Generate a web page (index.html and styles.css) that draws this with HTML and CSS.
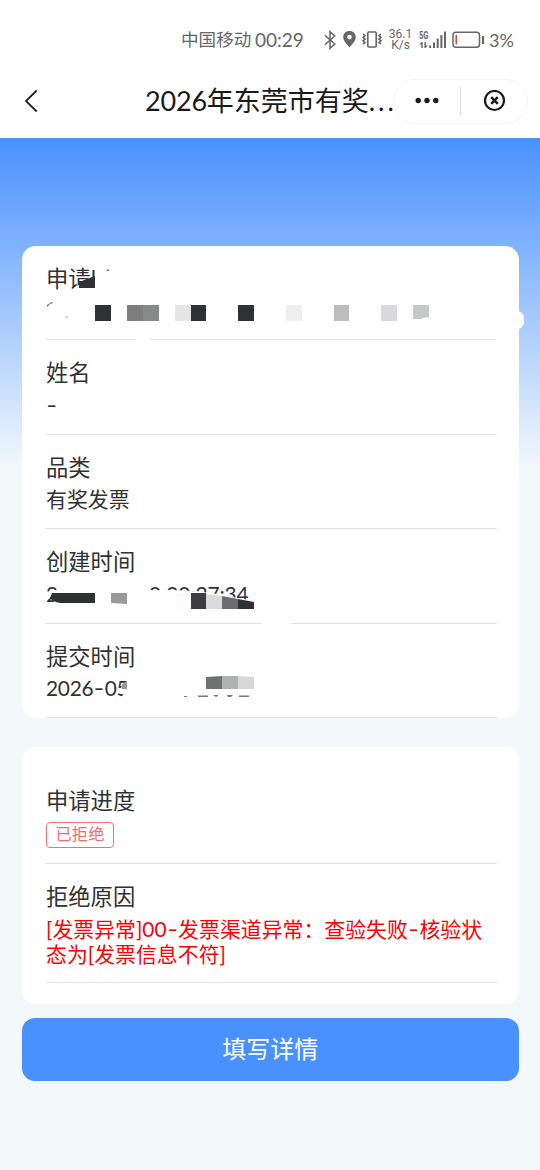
FILE: index.html
```
<!DOCTYPE html>
<html lang="zh-CN">
<head>
<meta charset="utf-8">
<title>2026年东莞市有奖发票</title>
<link rel="stylesheet" href="styles.css">
</head>
<body>
<div class="status">
  <span class="carrier">中国移动</span>
  <span class="clock">00:29</span>
  <svg class="bt" width="12" height="20" viewBox="0 0 12 20" fill="none" stroke="#666" stroke-width="1.5"><path d="M.8 5.2 10.8 14 6 18.4V1.6L10.8 6 .8 14.8"/></svg>
  <svg class="pin" width="13" height="17" viewBox="0 0 13 17"><path fill="#666" fill-rule="evenodd" d="M6.500 0C2.800 0 .2 2.700.2 6.100c0 4 3.800 7.100 6.300 10.400 2.500-3.300 6.300-6.400 6.300-10.400C12.800 2.700 10.200 0 6.500 0ZM6.500 3.800a2.300 2.300 0 1 1 0 4.600 2.300 2.300 0 0 1 0-4.600Z"/></svg>
  <svg class="vib" width="20" height="17" viewBox="0 0 20 17" fill="none" stroke="#666" stroke-width="1.6"><rect x="5.800" y="1" width="8.400" height="15" rx="1"/><path d="M1 3 3 4.700 1 6.400l2 1.700-2 1.700 2 1.700-2 1.700M19 3l-2 1.700 2 1.700-2 1.700 2 1.700-2 1.700 2 1.700"/></svg>
  <span class="speed"><span>36.1</span><span>K/s</span></span>
  <span class="signal">
    <span class="net">5G</span>
    <svg width="28" height="18" viewBox="0 0 28 18" fill="#666"><path d="M10.200 14.500h2V17h-2zM14 11.500h2V17h-2zM17.700 7.500h2V17h-2zM21.400 4h2v13h-2zM25 .5h2V17h-2z"/><path d="M2.200 11h1.500v6H2.200zM5.400 11h1.500v6H5.400zM.2 13.500l2.500-2.500v2.500zM6.500 17v-2.500H9z"/></svg>
  </span>
  <svg class="bat" width="33" height="18" viewBox="0 0 33 18" fill="none"><rect x="1" y="1.200" width="26.500" height="15" rx="3" stroke="#666" stroke-width="1.500"/><path d="M31 5v8" stroke="#666" stroke-width="2.200"/><path d="M4.200 4v9.500" stroke="#f22" stroke-width="1.400"/></svg>
  <span class="pct">3%</span>
</div>
<header class="nav">
  <svg class="back" width="14" height="24" viewBox="0 0 14 24" fill="none" stroke="#222" stroke-width="1.800"><path d="M12.700 1.500 2 12l10.700 10.500"/></svg>
  <h1 class="title"><span class="year">2026</span>年东莞市有奖<span class="dots">...</span></h1>
  <div class="capsule">
    <svg width="24" height="8" viewBox="0 0 24 8" fill="#1a1a1a"><circle cx="3.200" cy="3.500" r="2.700"/><circle cx="12" cy="3.500" r="2.700"/><circle cx="20.800" cy="3.500" r="2.700"/></svg>
    <i class="bar"></i>
    <svg width="22" height="22" viewBox="0 0 22 22" fill="none" stroke="#1a1a1a" stroke-width="2.200"><circle cx="11.500" cy="10.500" r="9.500"/><path d="m8.200 7.200 6.600 6.600m0-6.600-6.600 6.600" stroke-width="2.500"/></svg>
  </div>
</header>
<main class="page">
  <section class="card detail">
    <div class="row"><div class="label">申请</div><div class="value"></div></div>
    <div class="row"><div class="label">姓名</div><div class="value"><span class="hy">-</span></div></div>
    <div class="row"><div class="label">品类</div><div class="value">有奖发票</div></div>
    <div class="row"><div class="label">创建时间</div><div class="value stamp"><span>2</span><span>0&nbsp;00:27:34</span></div></div>
    <div class="row"><div class="label">提交时间</div><div class="value date">2026<span class="hy">-</span>05</div></div>
    <svg class="redaction" width="502" height="472" viewBox="22 246 502 472">
      <g fill="#fff">
        <path d="M74 291V288l8-5 14-4v13z"/>
        <path d="M136 338h14v4h-14z"/>
        <path d="M515 311h4q5 3 5 6v6q-2 5-5 6h-4z"/>
        <path d="M54 606V590h120l17 1 20 2 27 5 16 3v6H60zM140 582h28v5h-28z"/>
        <path d="M262 621h29v4h-29zM121 687l7-6v17h-7l3-5z"/>
      </g>
      <g fill="#303133">
        <path d="M79 288v-6l16-6v12z"/><path d="M92.500 270h2v7h-2z"/>
        <path d="M106 270l3-1v2h-2z" fill="#888"/>
        <path d="M47 305l5-3 1 1-3 1-3 3z" fill="#666"/>
        <path d="M65 317l3-1v1l-2 1z" fill="#aaa"/>
        <path d="M95 305h16v16H95zM191 305h15v16h-15zM238 305h16v16h-16z"/>
      </g>
      <path fill="#7d7e7d" d="M127 305h16v16h-16z"/><path fill="#888a89" d="M143 305h16v16h-16z"/>
      <path fill="#e5e5e5" d="M175 305h16v16h-16z"/><path fill="#eee" d="M286 305h16v16h-16z"/>
      <path fill="#bdbdbd" d="M334 305h15v16h-15z"/><path fill="#d9d9db" d="M381 305h16v16h-16z"/>
      <path fill="#c7c9c8" d="M413 305h16v12l-6 1-1 1-9 0z"/>
      <path fill="#303133" d="M52 593h43v10H60q-7-1-10-5z"/>
      <path fill="#9a9a9c" d="M111 593h16v11l-16-1z"/>
      <path fill="#fcfcfc" d="M175 593h16v16h-16z"/>
      <path fill="#3d3d3f" d="M191 593h15v16h-15z"/><path fill="#dadcdb" d="M206 594l16 2v13h-16z"/>
      <path fill="#6c6d6f" d="M222 596l16 3v10h-16z"/><path fill="#303133" d="M238 599l16 3v7h-16z"/>
      <path fill="#999" d="M122 684l5-3v8h-5z"/>
      <path fill="#707271" d="M206 677l16-1v13h-16z"/><path fill="#b0b2b1" d="M222 676h16v13h-16z"/><path fill="#d7d7d7" d="M238 676l16 1v12h-16z"/>
      <path fill="#777" d="M184 696h3v1h-3zM198 695.500h10v1.500h-10zM213 695h5v1l-2 1zM227 695h6l-2 2h-3zM239 695.500h10v1.500h-10z"/>
    </svg>
  </section>
  <section class="card progress">
    <div class="row"><div class="label">申请进度</div><span class="tag">已拒绝</span></div>
    <div class="row"><div class="label">拒绝原因</div><div class="value error">[发票异常]00<span class="hy">-</span>发票渠道异常：查验失败<span class="hy">-</span>核验状态为[发票信息不符]</div></div>
  </section>
  <button class="submit">填写详情</button>
</main>
</body>
</html>
```
FILE: styles.css
```
* { box-sizing: border-box; }
body {
  margin: 0;
  width: 540px;
  min-height: 1170px;
  background: #f3f8fb;
  color: #303133;
  font-family: Lato, "Noto Sans CJK SC", sans-serif;
}
svg { display: block; flex: none; }
.status {
  height: 64px;
  padding: 15px 0 0 181px;
  display: flex;
  align-items: center;
  background: #fff;
  color: #666;
  white-space: nowrap;
}
.carrier { font-size: 17.6px; width: 74px; line-height: 24px; margin-top: 1px; }
.clock { font-size: 19px; width: 70px; }
.bt { margin-left: -1px; }
.pin { margin-left: 7px; }
.vib { margin-left: 6px; }
.speed {
  width: 23px;
  margin-left: 7px;
  display: flex;
  flex-direction: column;
  align-items: center;
  font: 12px/11px Roboto, sans-serif;
}
.signal { margin-left: 7px; display: grid; }
.signal > * { grid-area: 1 / 1; }
.net { font: bold 10px/9px Roboto, sans-serif; transform: scaleX(.75); transform-origin: left; }
.bat { margin-left: 5px; }
.pct { margin-left: 4px; font-size: 18px; }
.nav {
  height: 74px;
  padding: 0 12px 0 24px;
  display: flex;
  align-items: center;
  background: #fff;
}
.title {
  margin: 0 0 0 107px;
  width: 248px;
  font-size: 27px;
  font-weight: 400;
  line-height: 40px;
  white-space: nowrap;
  color: #1a1a1a;
}
.year { letter-spacing: -.2px; }
.dots { letter-spacing: 2.900px; }
.capsule {
  width: 135px;
  height: 45px;
  padding: 0 22px 0 21px;
  display: flex;
  align-items: center;
  justify-content: space-between;
  border: 1px solid #f5f5f5;
  border-radius: 23px;
}
.bar { width: 1px; height: 28px; margin-left: 10px; margin-right: 11px; background: #ddd; }
.page {
  height: 1032px;
  padding: 108px 21.500px 0 22px;
  background: linear-gradient(#4891fe, #f3f8fb 330px);
}
.card {
  padding: 0 21.500px 0 24px;
  background: #fff;
  border-radius: 14px;
}
.detail { position: relative; height: 472px; padding-top: 0; }
.detail .row:first-child { height: 94px; }
.redaction { position: absolute; top: 0; left: 0; }
.row {
  height: 94.500px;
  padding-top: 20px;
  border-bottom: 1px solid #e3e3e3;
}
.label { font-size: 22.300px; line-height: 25px; }
.value { margin-top: 6.500px; font-size: 20.900px; line-height: 25px; }
.hy {
  display: inline-block;
  width: 11.500px;
  line-height: 20px;
  text-align: center;
  transform: scaleX(1.4);
}
.date { letter-spacing: -.3px; }
.stamp { display: flex; gap: 91px; letter-spacing: -.1px; }
.progress { height: 257px; margin-top: 29px; padding-top: 21px; }
.progress .row { height: 96px; }
.progress .row + .row { height: 119px; }
.error { margin-top: 7px; color: #f00; }
.tag {
  display: block;
  width: 68px;
  height: 26px;
  margin-top: 9px;
  border: 1.500px solid #f56c6c;
  border-radius: 4px;
  color: #f56c6c;
  font-size: 16.300px;
  line-height: 22px;
  text-align: center;
}
.submit {
  display: block;
  width: 100%;
  height: 63px;
  margin-top: 14px;
  padding: 0 0 4px;
  border: 0;
  border-radius: 13px;
  background: #4891fe;
  color: #fff;
  font: 24px Lato, "Noto Sans CJK SC", sans-serif;
}
```
